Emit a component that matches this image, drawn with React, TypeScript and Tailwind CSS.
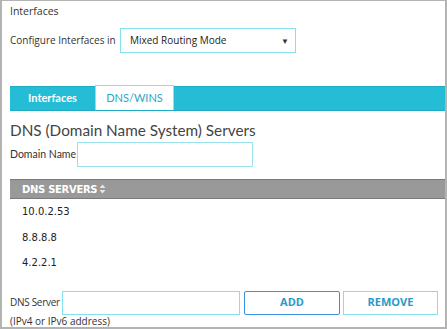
import React from "react";

function SortIcon() {
  return (
    <svg width="7" height="10" viewBox="0 0 7 10" className="ml-[2px]">
      <path d="M3.5 0.5 L6.5 4 L0.5 4 Z" fill="#e6e6e6" />
      <path d="M3.5 9.5 L6.5 6 L0.5 6 Z" fill="#e6e6e6" />
    </svg>
  );
}

export default function App() {
  const servers = ["10.0.2.53", "8.8.8.8", "4.2.2.1"];
  const open = { fontFamily: '"Open Sans", sans-serif' };
  const geo = { fontFamily: 'Lato, "Noto Sans", sans-serif' };
  return (
    <div className="w-[447px] h-[329px] bg-white overflow-hidden">
      <div
        className="w-[447px] h-[329px] border-t border-l-2 border-r-2 border-b-2 border-[#b3b3b3] text-[#333] whitespace-nowrap"
        style={open}
      >
        <div className="pl-[8px] pt-[3px] text-[10.5px] leading-[15px]">Interfaces</div>

        <div className="flex items-center pl-[8px] mt-[9px]">
          <span className="text-[10px] w-[110px] shrink-0">Configure Interfaces in</span>
          <div className="w-[176px] h-[25px] border border-[#86dfec] flex items-center justify-between pl-[9px] pr-[6px]">
            <span className="text-[10px] text-[#222]">Mixed Routing Mode</span>
            <span className="text-[8px] text-[#333]">▼</span>
          </div>
        </div>

        <div className="ml-[8px] mt-[33px] h-[25px] bg-[#25bcd6] border-t border-b border-[#1fadc6] flex" style={geo}>
          <div className="w-[85px] flex items-center justify-center text-white font-bold text-[11px]">Interfaces</div>
          <div className="w-[79px] -mt-[2px] h-[25px] bg-white border-t border-l border-r border-[#9adbe6] flex items-center justify-center text-[#2aa6c4] text-[11px]">
            DNS/WINS
          </div>
        </div>

        <div className="pl-[8px] mt-[10px] text-[15.3px] leading-[18px] text-[#444]" style={geo}>
          DNS (Domain Name System) Servers
        </div>

        <div className="flex items-center pl-[8px] mt-[3px]" style={geo}>
          <span className="text-[10.5px] w-[67px] shrink-0 text-[#333]">Domain Name</span>
          <div className="w-[176px] h-[25px] border border-[#9ae3ee]" />
        </div>

        <div className="ml-[8px] mt-[12px] h-[20px] bg-[#999999] border-t border-b border-[#7a7a7a] flex items-center pl-[12px]">
          <span className="text-white font-bold text-[10px]" style={{ fontFamily: '"DejaVu Sans", Verdana, sans-serif', letterSpacing: "-0.3px" }}>
            DNS SERVERS
          </span>
          <SortIcon />
        </div>

        <div className="pl-[20px]" style={{ fontFamily: '"DejaVu Sans", Verdana, sans-serif' }}>
          {servers.map((s) => (
            <div key={s} className="h-[25.5px] flex items-center text-[10px] text-[#222]">
              {s}
            </div>
          ))}
        </div>

        <div className="flex items-center pl-[8px] mt-[15px]">
          <span className="text-[10px] w-[52px] shrink-0 tracking-[-0.3px]">DNS Server</span>
          <div className="w-[178px] h-[24px] border border-[#86dfec] shrink-0" />
          <button className="ml-[4px] w-[96px] h-[24px] shrink-0 border border-[#3d8fe0] rounded-[2px] text-[#2a9ac4] font-bold text-[11px]">
            ADD
          </button>
          <button className="ml-[3px] w-[95px] h-[24px] shrink-0 border border-[#86dfec] text-[#2a9ac4] font-bold text-[11px]">
            REMOVE
          </button>
        </div>
        <div className="pl-[8px] text-[10px] leading-[13px]">(IPv4 or IPv6 address)</div>
      </div>
    </div>
  );
}
